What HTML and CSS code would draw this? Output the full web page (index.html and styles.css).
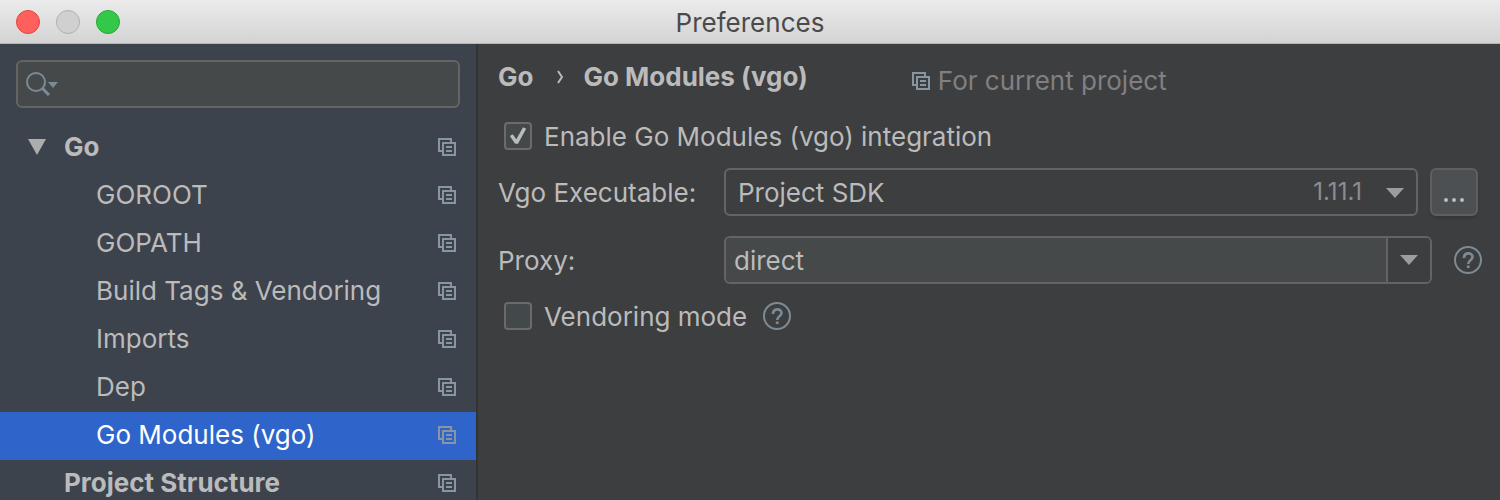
FILE: index.html
```html
<!DOCTYPE html>
<html lang="en">
<head>
<meta charset="utf-8">
<title>Preferences</title>
<link rel="stylesheet" href="styles.css">
</head>
<body>
<svg class="defs" aria-hidden="true">
  <symbol id="project" viewBox="0 0 18 18">
    <path d="M4 13H1V1h12v3M5 5h12v12H5zM8 9h6M8 13h6" fill="none" stroke="currentColor" stroke-width="2"/>
  </symbol>
  <symbol id="help" viewBox="0 0 28 28">
    <circle cx="14" cy="14" r="13" fill="none" stroke="currentColor" stroke-width="2"/>
    <path d="M10 12c0-6 8.500-6 8.500-1 0 3.500-4.300 3-4.300 7" fill="none" stroke="currentColor" stroke-width="2.600"/>
    <path d="M12.800 19.500h2.800v2.500h-2.800z" fill="currentColor"/>
  </symbol>
  <symbol id="arrow" viewBox="0 0 18 10">
    <path d="M0 0h18L9 10z" fill="currentColor"/>
  </symbol>
</svg>

<header class="titlebar">
  <div class="lights">
    <button class="light close" aria-label="Close"></button>
    <button class="light minimize" aria-label="Minimize" disabled></button>
    <button class="light zoom" aria-label="Zoom"></button>
  </div>
  <h1>Preferences</h1>
</header>

<div class="window">
  <nav class="sidebar">
    <div class="search">
      <svg class="search-icon" viewBox="0 0 32 24" aria-hidden="true">
        <circle cx="10" cy="10" r="9" fill="none" stroke="currentColor" stroke-width="2"/>
        <path d="M16 16l7 7" stroke="currentColor" stroke-width="3"/>
        <path d="M22 10h10l-5 6z" fill="currentColor"/>
      </svg>
      <input type="text" aria-label="Search preferences">
    </div>
    <ul class="tree">
      <li class="group"><svg class="toggle" viewBox="0 0 18 16"><path d="M0 0h18L9 16z" fill="currentColor"/></svg><a href="#">Go</a><svg class="project"><use href="#project"/></svg></li>
      <li><a href="#">GOROOT</a><svg class="project"><use href="#project"/></svg></li>
      <li><a href="#">GOPATH</a><svg class="project"><use href="#project"/></svg></li>
      <li><a href="#">Build Tags &amp; Vendoring</a><svg class="project"><use href="#project"/></svg></li>
      <li><a href="#">Imports</a><svg class="project"><use href="#project"/></svg></li>
      <li><a href="#">Dep</a><svg class="project"><use href="#project"/></svg></li>
      <li class="selected"><a href="#">Go Modules (vgo)</a><svg class="project"><use href="#project"/></svg></li>
      <li class="group leaf"><a href="#">Project Structure</a><svg class="project"><use href="#project"/></svg></li>
    </ul>
  </nav>

  <main class="content">
    <div class="heading">
      <h2>Go<svg class="chevron" viewBox="0 0 6 14"><path d="M1 1l4 6-4 6" fill="none" stroke="currentColor" stroke-width="2"/></svg>Go Modules (vgo)</h2>
      <span class="scope"><svg class="project"><use href="#project"/></svg>For current project</span>
    </div>

    <div class="check">
      <input type="checkbox" id="enable" checked>
      <label for="enable">Enable Go Modules (vgo) integration</label>
    </div>

    <div class="field executable">
      <label for="executable">Vgo Executable:</label>
      <div class="select">
        <select id="executable"><option>Project SDK</option></select>
        <span class="version">1.11.1</span>
        <svg class="arrow"><use href="#arrow"/></svg>
      </div>
      <button class="browse" aria-label="Browse"><i></i><i></i><i></i></button>
    </div>

    <div class="field proxy">
      <label for="proxy">Proxy:</label>
      <div class="combo">
        <input type="text" id="proxy" value="direct">
        <button aria-label="Show proxies"><svg class="arrow"><use href="#arrow"/></svg></button>
      </div>
      <svg class="help"><use href="#help"/></svg>
    </div>

    <div class="check">
      <input type="checkbox" id="vendoring">
      <label for="vendoring">Vendoring mode</label>
      <svg class="help"><use href="#help"/></svg>
    </div>
  </main>
</div>
</body>
</html>
```
FILE: styles.css
```css
* {
    box-sizing: border-box;
}

body {
    display: flex;
    flex-direction: column;
    height: 100vh;
    margin: 0;
    overflow: hidden;
    background: #3d3e40;
    color: #bbbbbb;
    font-family: Inter, "Liberation Sans", sans-serif;
    font-size: 26px;
    line-height: 32px;
}

button,
input,
select {
    margin: 0;
    padding: 0;
    border: 0;
    color: inherit;
    font: inherit;
    appearance: none;
}

svg {
    display: block;
    flex: none;
}

.defs {
    position: absolute;
    width: 0;
    height: 0;
}

/* Title bar */
.titlebar {
    display: grid;
    grid-template-columns: 1fr auto 1fr;
    align-items: center;
    flex: none;
    height: 44px;
    padding: 0 16px;
    background: linear-gradient(#ebebeb, #d3d3d3);
    box-shadow: inset 0 -1px #b4b4b4;
}

.titlebar h1 {
    margin: 0;
    padding-top: 2px;
    color: #4a4a4a;
    font-size: 26px;
    font-weight: 400;
}

.lights {
    display: flex;
    gap: 16px;
}

.light {
    width: 24px;
    height: 24px;
    border: 1px solid;
    border-radius: 50%;
}

.close {
    background: #ff605c;
    border-color: #e2463f;
}

.minimize {
    background: #d0d0d0;
    border-color: #b0b0b0;
}

.zoom {
    background: #34c84a;
    border-color: #1fae30;
}

.window {
    display: flex;
    flex: 1;
    min-height: 0;
}

/* Sidebar */
.sidebar {
    flex: none;
    width: 478px;
    overflow: hidden;
    background: #3d434c;
    border-right: 2px solid #323334;
}

.search {
    display: flex;
    align-items: center;
    gap: 8px;
    height: 48px;
    margin: 16px;
    padding: 0 8px;
    background: #45494a;
    border: 2px solid #646464;
    border-radius: 6px;
}

.search input {
    flex: 1;
    min-width: 0;
    background: none;
    outline: none;
}

.search-icon {
    width: 32px;
    height: 24px;
    color: #7b8a96;
}

.tree {
    margin: 0;
    padding: 0;
    list-style: none;
}

.tree li {
    display: flex;
    align-items: center;
    height: 48px;
    padding: 0 20px 2px 96px;
}

.tree a {
    flex: 1;
    color: inherit;
    text-decoration: none;
}

.tree .group {
    padding-left: 28px;
    font-weight: 700;
}

.tree .leaf {
    padding-left: 64px;
}

.tree .selected {
    background: #2f65ca;
    color: #ffffff;
}

.toggle {
    width: 18px;
    height: 16px;
    margin-right: 18px;
    color: #adadad;
}

.project {
    width: 18px;
    height: 18px;
    color: #8896a2;
}

/* Settings */
.content {
    flex: 1;
    min-width: 0;
    padding: 0 18px 0 20px;
}

.heading {
    display: flex;
    align-items: center;
    gap: 104px;
    height: 68px;
    padding-bottom: 2px;
}

.heading h2 {
    display: flex;
    align-items: center;
    margin: 0;
    font-size: 26px;
    font-weight: 700;
}

.chevron {
    width: 6px;
    height: 14px;
    margin: 0 20px 0 24px;
}

.scope {
    display: flex;
    align-items: center;
    gap: 8px;
    padding-top: 8px;
    color: #808080;
}

.check {
    display: flex;
    align-items: center;
    height: 48px;
    padding-left: 6px;
}

.check label,
.field label {
    padding-top: 2px;
}

.check input {
    width: 28px;
    height: 28px;
    margin-right: 12px;
    background: #43494a;
    border: 2px solid #6b6b6b;
    border-radius: 4px;
}

.check input:checked::before {
    content: "";
    display: block;
    width: 24px;
    height: 24px;
    background: #bbbbbb;
    clip-path: polygon(16% 50%, 28% 43%, 43% 64%, 71% 14%, 84% 20%, 50% 82%, 38% 82%);
}

.check .help {
    margin-left: 16px;
}

.field {
    display: flex;
    align-items: center;
}

.field label {
    flex: none;
    width: 226px;
}

.executable {
    margin: 8px 4px 20px 0;
}

.proxy {
    margin-bottom: 8px;
}

.select {
    position: relative;
    flex: 1;
    height: 48px;
}

.select select {
    width: 100%;
    height: 100%;
    padding: 2px 120px 0 12px;
    background: #3d3e40;
    border: 2px solid #646464;
    border-radius: 6px;
}

.version {
    position: absolute;
    top: 8px;
    right: 56px;
    color: #8c8c8c;
    font-size: 24px;
    pointer-events: none;
}

.arrow {
    width: 18px;
    height: 10px;
    color: #9b9da0;
}

.select .arrow {
    position: absolute;
    top: 20px;
    right: 14px;
    pointer-events: none;
}

.browse {
    display: flex;
    align-items: flex-end;
    justify-content: center;
    gap: 4px;
    width: 48px;
    height: 48px;
    margin-left: 12px;
    padding-bottom: 12px;
    background: #4c5052;
    border: 2px solid #5e6060;
    border-radius: 6px;
    box-shadow: 0 2px 2px #353638;
}

.browse i {
    width: 4px;
    height: 4px;
    background: #bbbbbb;
    border-radius: 50%;
}

.combo {
    display: flex;
    flex: 1;
    height: 48px;
    overflow: hidden;
    border: 2px solid #646464;
    border-radius: 6px;
}

.combo input {
    flex: 1;
    min-width: 0;
    padding: 2px 0 0 8px;
    background: #45494a;
    outline: none;
}

.combo button {
    display: flex;
    align-items: center;
    justify-content: center;
    width: 44px;
    background: #3d3e40;
    border-left: 2px solid #646464;
}

.help {
    width: 28px;
    height: 28px;
    color: #7d8b95;
}

.proxy .help {
    margin-left: 22px;
}
```
